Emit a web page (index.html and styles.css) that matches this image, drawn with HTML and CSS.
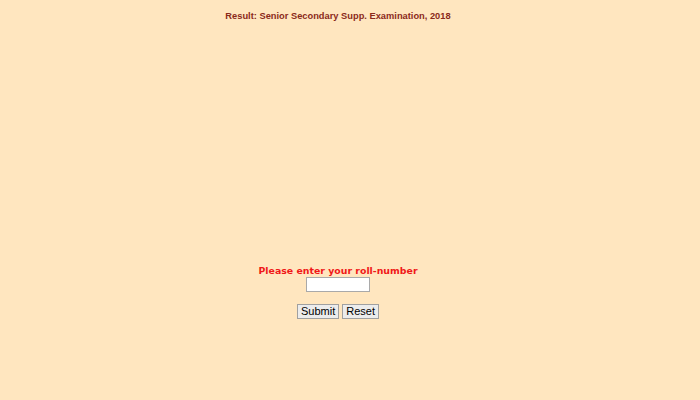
FILE: index.html
```html
<!DOCTYPE html>
<html>
<head>
<meta charset="utf-8">
<link rel="stylesheet" href="styles.css">
</head>
<body>
<div class="page">
  <h1 class="title">Result: Senior Secondary Supp. Examination, 2018</h1>
  <form class="form">
    <div class="label">Please enter your roll-number</div>
    <input class="roll" type="text">
    <div class="buttons">
      <button type="button" class="btn">Submit</button>
      <button type="reset" class="btn">Reset</button>
    </div>
  </form>
</div>
</body>
</html>
```

FILE: styles.css
```css
html, body {
  margin: 0;
  padding: 0;
  background: #ffe6bf;
}
.page {
  width: 676px;
  display: flex;
  flex-direction: column;
  align-items: center;
}
.title {
  margin: 10px 0 0;
  font-family: "Liberation Sans", Arial, sans-serif;
  font-size: 9.3px;
  font-weight: bold;
  color: #8b2a1a;
  line-height: 13px;
}
.form {
  margin-top: 241px;
  display: flex;
  flex-direction: column;
  align-items: center;
}
.label {
  font-family: "DejaVu Sans", Verdana, sans-serif;
  font-size: 9.4px;
  font-weight: bold;
  color: #f01818;
  line-height: 13px;
}
.roll {
  width: 64px;
  height: 15px;
  box-sizing: border-box;
  border: 1px solid #a9a9a9;
  background: #fff;
  margin: 0;
  padding: 0;
}
.buttons {
  margin-top: 12px;
  display: flex;
  gap: 3px;
}
.btn {
  font-family: "Liberation Sans", Arial, sans-serif;
  font-size: 11px;
  height: 15px;
  padding: 0 3px;
  border: 1px solid #a0a0a0;
  background: #ececec;
  color: #000;
  line-height: 13px;
  box-sizing: border-box;
}
```
